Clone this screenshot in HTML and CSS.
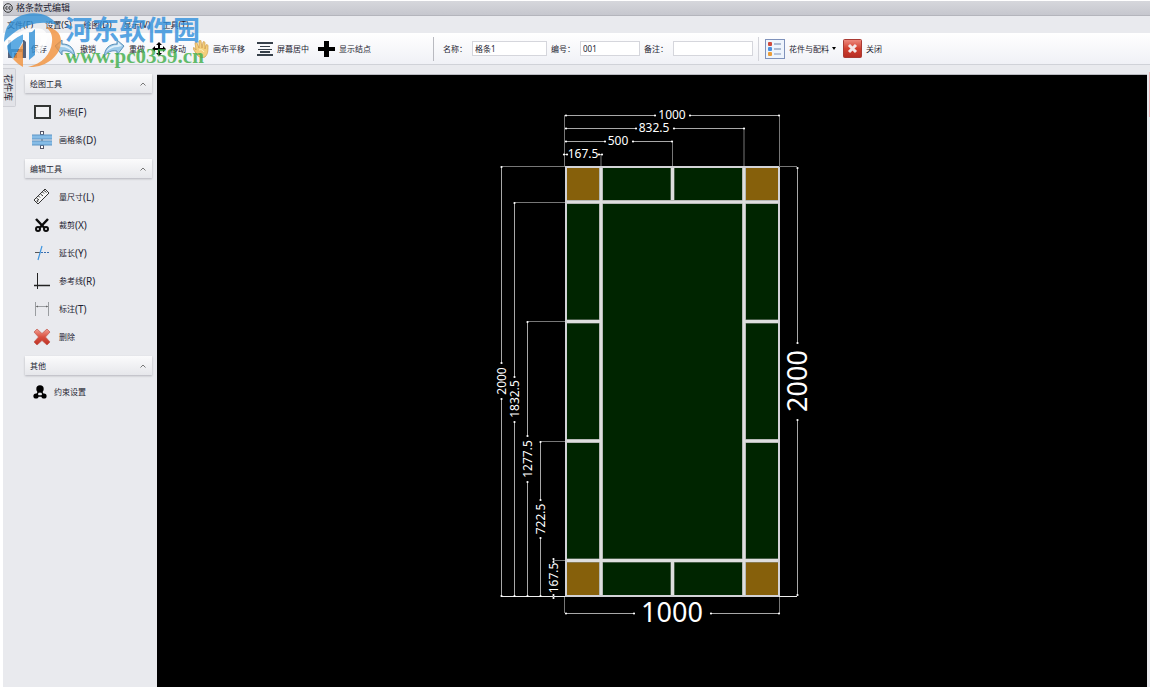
FILE: index.html
```html
<!DOCTYPE html>
<html lang="zh-CN">
<head>
  <meta charset="UTF-8">
  <meta name="viewport" content="width=device-width, initial-scale=1.0">
  <title>格条款式编辑</title>
  <link rel="stylesheet" href="styles.css">
</head>
<body>
  <div class="window">
    <header class="titlebar">
      <svg width="10" height="10" viewBox="0 0 10 10" fill="none" stroke="#333">
        <circle cx="5" cy="5" r="4.3"/>
        <path d="M4.6 3.8a1.3 1.3 0 1 0 0 2.4M7.6 3.8a1.3 1.3 0 1 0 0 2.4"/>
      </svg>
      <span>格条款式编辑</span>
    </header>

    <nav class="menubar">
      <button>文件<span class="key">(F)</span></button>
      <button>设置<span class="key">(S)</span></button>
      <button>绘图<span class="key">(D)</span></button>
      <button>显示<span class="key">(V)</span></button>
      <button>工具<span class="key">(T)</span></button>
    </nav>

    <div class="toolbar">
      <div class="actions">
        <button>
          <svg width="20" height="20" viewBox="0 0 20 20">
            <path d="M1 1h16l2 2v16H1z" fill="#55617a"/>
            <path d="M4 1h12v9H4z" fill="#e3e8f0"/>
            <path d="M5 13h10v6H5z" fill="#c5ccd8"/>
            <path d="M7 14h3v5H7z" fill="#3f485c"/>
          </svg>
          保存
        </button>
        <button>
          <svg width="22" height="20" viewBox="0 0 22 20">
            <path d="M1 7L8 1v4c8 0 12 4 13 13-3-5-7-7-13-6v4z" fill="#9dcbea" stroke="#5a8fb8"/>
            <path d="M3 7l4-4v3c6 0 10 3 12 7-3-3-7-5-12-5z" fill="#dff0fb"/>
          </svg>
          撤销
        </button>
        <button>
          <svg width="22" height="20" viewBox="0 0 22 20">
            <path d="M21 7l-7-6v4C6 5 2 9 1 18c3-5 7-7 13-6v4z" fill="#9dcbea" stroke="#5a8fb8"/>
            <path d="M19 7l-4-4v3C9 6 5 9 3 13c3-3 7-5 12-5z" fill="#dff0fb"/>
          </svg>
          重做
        </button>
        <button>
          <svg width="14" height="14" viewBox="0 0 14 14">
            <path d="M7 0l3 3H8v3h3V4l3 3-3 3V8H8v3h2l-3 3-3-3h2V8H3v2L0 7l3-3v2h3V3H4z"/>
          </svg>
          移动
        </button>
        <button>
          <svg width="16" height="18" viewBox="0 0 16 18">
            <path d="M5 16C3 13 1 11 0 8c1-1 2 0 3 2L2 3c1-1 2-1 2 0l2 5V1c1-1 2-1 2 0l1 7 1-6c1-1 2 0 2 1v6l1-4c1-1 2 0 2 1 0 5 0 8-3 11-2 1-4 1-5 0z" fill="#f3cf7c" stroke="#d09a45" stroke-width=".7"/>
            <path d="M6 10c2-1 4 0 5 2" fill="none" stroke="#fff0c0"/>
          </svg>
          画布平移
        </button>
        <div class="view">
          <button>
            <svg width="16" height="14" viewBox="0 0 16 14" fill="#37404a">
              <path d="M0 0h16v2H0zM3 4h10v1H3zM1 7h14v1H1zM3 9h10v2H3zM0 12h16v2H0z"/>
            </svg>
            屏幕居中
          </button>
          <button>
            <svg width="17" height="18" viewBox="0 0 17 18">
              <path d="M6 1h5v6h6v4h-6v6H6v-6H0V7h6z"/>
            </svg>
            显示结点
          </button>
        </div>
      </div>

      <div class="fields">
        <label for="name">名称：</label>
        <input class="name" type="text" id="name" value="格条1">
        <label for="code">编号：</label>
        <input class="code" type="text" id="code" value="001">
        <label for="remark">备注：</label>
        <input class="remark" type="text" id="remark">
      </div>

      <div class="extra">
        <button>
          <svg width="20" height="20" viewBox="0 0 20 20">
            <rect x=".5" y=".5" width="19" height="19" fill="#eef4fc" stroke="#7f92bb"/>
            <rect x="3" y="3" width="4" height="4" rx="1" fill="#cf4a3c"/>
            <rect x="3" y="8" width="4" height="4" rx="1" fill="#4c8fdc"/>
            <rect x="3" y="13" width="4" height="4" rx="1" fill="#eb9d38"/>
            <path d="M9 5h7M9 10h7" stroke="#6a80a8"/>
            <path d="M9 15h7" stroke="#b7c4da" stroke-width="2"/>
          </svg>
          花件与配料
          <svg class="drop" width="4" height="3" viewBox="0 0 4 3"><path d="M0 0h4L2 3z"/></svg>
        </button>
        <button>
          <svg width="19" height="19" viewBox="0 0 19 19">
            <defs>
              <linearGradient id="closeFill" x2="0" y2="1">
                <stop offset="0" stop-color="#ee8c80"/>
                <stop offset=".5" stop-color="#d2402f"/>
                <stop offset="1" stop-color="#b52c22"/>
              </linearGradient>
            </defs>
            <rect x=".5" y=".5" width="18" height="18" rx="1" fill="url(#closeFill)" stroke="#a93a33"/>
            <path d="M6 6l7 7M13 6l-7 7" stroke="#f4e8e8" stroke-width="3"/>
          </svg>
          关闭
        </button>
      </div>
    </div>

    <div class="workspace">
      <button class="side-tab">花件库</button>

      <aside class="tools">
        <section>
          <h2>绘图工具 <svg width="6" height="4" viewBox="0 0 6 4"><path d="M.5 3.5L3 1l2.500 2.500"/></svg></h2>
          <button>
            <span class="icon"><svg width="17" height="15" viewBox="0 0 17 15"><rect x="1" y="1" width="15" height="12" fill="#f0f1f3" stroke="#333634" stroke-width="2"/></svg></span>
            外框<span class="key">(F)</span>
          </button>
          <button>
            <span class="icon">
              <svg width="20" height="20" viewBox="0 0 20 20">
                <path d="M10 1v18" stroke="#444"/>
                <rect x="8.500" y="1.500" width="3" height="3" fill="#fff" stroke="#556"/>
                <rect x="8.500" y="15.500" width="3" height="3" fill="#fff" stroke="#556"/>
                <path d="M0 5h20v4H0zM0 11h20v4H0z" fill="#86bce6"/>
                <path d="M0 5h20M0 9h20M0 11h20M0 15h20" stroke="#5d94c4"/>
              </svg>
            </span>
            画格条<span class="key">(D)</span>
          </button>
        </section>

        <section>
          <h2>编辑工具 <svg width="6" height="4" viewBox="0 0 6 4"><path d="M.5 3.5L3 1l2.500 2.500"/></svg></h2>
          <button>
            <span class="icon">
              <svg width="18" height="18" viewBox="0 0 18 18" fill="none" stroke="#333">
                <path d="M1 12L12 1l4 4L5 16z" fill="#f7f7f7"/>
                <path d="M3.500 10l2.500 2M5.500 8l1.500 1.500M7.500 6l2.500 2M9.500 4l1.500 1.500M11 2.500l2.500 2"/>
                <circle cx="4.500" cy="13" r=".6"/>
              </svg>
            </span>
            量尺寸<span class="key">(L)</span>
          </button>
          <button>
            <span class="icon">
              <svg width="14" height="14" viewBox="0 0 14 14" fill="none" stroke="#0c0c0c" stroke-width="2">
                <path d="M1 1l8.500 9M13 1L4.500 10" stroke-width="2.500"/>
                <circle cx="3" cy="11" r="2"/>
                <circle cx="11" cy="11" r="2"/>
              </svg>
            </span>
            裁剪<span class="key">(X)</span>
          </button>
          <button>
            <span class="icon">
              <svg width="16" height="16" viewBox="0 0 16 16" fill="none">
                <path d="M1 7.500h5" stroke="#555"/>
                <path d="M7 7.500h9" stroke="#3a6fb0" stroke-dasharray="2 1"/>
                <path d="M4 15L8 1" stroke="#3d95e0" stroke-width="1.200"/>
              </svg>
            </span>
            延长<span class="key">(Y)</span>
          </button>
          <button>
            <span class="icon">
              <svg width="16" height="16" viewBox="0 0 16 16" fill="none" stroke="#222">
                <path d="M3.500 0v16"/>
                <path d="M0 12.500h16" stroke-width="1.500"/>
              </svg>
            </span>
            参考线<span class="key">(R)</span>
          </button>
          <button>
            <span class="icon">
              <svg width="16" height="14" viewBox="0 0 16 14" fill="none" stroke="#9a9da0">
                <path d="M1.500 0v14M14.500 0v14M2 4.500h12"/>
                <path d="M2 4.500l2-1v2zM14 4.500l-2-1v2z" fill="#666" stroke="none"/>
              </svg>
            </span>
            标注<span class="key">(T)</span>
          </button>
          <button>
            <span class="icon">
              <svg width="18" height="18" viewBox="0 0 18 18">
                <defs>
                  <linearGradient id="crossFill" x2="0" y2="1">
                    <stop offset="0" stop-color="#f2a093"/>
                    <stop offset=".5" stop-color="#d9503f"/>
                    <stop offset="1" stop-color="#bd3226"/>
                  </linearGradient>
                </defs>
                <path d="M1 4l3-3 5 4.500L14 1l3 3-4.500 5 4.500 5-3 3-5-4.500L4 17l-3-3 4.500-5z" fill="url(#crossFill)" stroke="#c2594d" stroke-width=".7" stroke-linejoin="round"/>
              </svg>
            </span>
            删除
          </button>
        </section>

        <section>
          <h2>其他 <svg width="6" height="4" viewBox="0 0 6 4"><path d="M.5 3.5L3 1l2.500 2.500"/></svg></h2>
          <button class="near">
            <span class="icon">
              <svg width="14" height="14" viewBox="0 0 14 14">
                <path d="M7 4L3 11h8z" fill="none" stroke="#000" stroke-width="1.500"/>
                <circle cx="7" cy="4" r="3.700"/>
                <circle cx="3" cy="11" r="2.600"/>
                <circle cx="11" cy="11" r="2.600"/>
              </svg>
            </span>
            约束设置
          </button>
        </section>
      </aside>

      <main class="canvas">
        <svg class="drawing" viewBox="157 75 990 612">
          <defs>
            <marker id="dot" markerWidth="4" markerHeight="4" refX="2" refY="2" markerUnits="userSpaceOnUse">
              <circle cx="2" cy="2" r="1.100" fill="#fff"/>
            </marker>
          </defs>

          <!-- glass -->
          <rect x="566" y="167" width="213" height="429" fill="#002500"/>
          <g fill="#86600b">
            <rect x="566" y="167" width="35" height="35"/>
            <rect x="744" y="167" width="35" height="35"/>
            <rect x="566" y="561" width="35" height="35"/>
            <rect x="744" y="561" width="35" height="35"/>
          </g>

          <!-- bars -->
          <path class="bar-edge" d="M601 167v429M744 167v429M672.500 167v33M672.500 561v35M566 321.500h34M745 321.500h34M566 441h34M745 441h34M566 202h213M566 560.500h213"/>
          <path class="bar" d="M601 167v429M744 167v429M672.500 167v33M672.500 561v35M566 321.500h34M745 321.500h34M566 441h34M745 441h34M566 202h213M566 560.500h213"/>
          <rect class="frame" x="566" y="167" width="213" height="429"/>

          <!-- extension lines -->
          <path class="ext" d="M564.500 115v51M779.500 115v51M744 128v38M672.500 141v25M601 154v12M501 166.500h64M514 202.500h51M527 321.500h38M540 441.500h25M553 560.500h12M779 166.500h18M564.500 597v16M779.500 597v16"/>
          <path class="base" d="M501 596.500h64M779 596.500h18"/>

          <!-- dimension lines -->
          <g class="dim">
            <path d="M566 115.500h89"/><path d="M690 115.500h89"/>
            <path d="M566 128.500h70"/><path d="M674 128.500h70"/>
            <path d="M566 141.500h39"/><path d="M633 141.500h39"/>
            <path d="M564 154.500h3"/><path d="M599 154.500h3"/>
            <path d="M501.500 167v196"/><path d="M501.500 399v197"/>
            <path d="M514.500 203v174"/><path d="M514.500 422v174"/>
            <path d="M527.500 322v114"/><path d="M527.500 482v114"/>
            <path d="M540.500 442v58"/><path d="M540.500 538v58"/>
            <path d="M553.500 559v3"/><path d="M553.500 595v3"/>
            <path d="M797.500 168v175"/><path d="M797.500 420v175"/>
            <path d="M566 613.500h68"/><path d="M711 613.500h68"/>
          </g>

          <g class="num">
            <text x="672" y="119">1000</text>
            <text x="654" y="132">832.5</text>
            <text x="618" y="145">500</text>
            <text x="583" y="158">167.5</text>
            <text transform="translate(506 381) rotate(-90)">2000</text>
            <text transform="translate(519 399) rotate(-90)">1832.5</text>
            <text transform="translate(532 459) rotate(-90)">1277.5</text>
            <text transform="translate(545 519) rotate(-90)">722.5</text>
            <text transform="translate(558 578) rotate(-90)">167.5</text>
          </g>
          <g class="num big">
            <text x="672" y="622">1000</text>
            <text transform="translate(807 381) rotate(-90)">2000</text>
          </g>
        </svg>
      </main>
      <div class="edge"></div>
    </div>
  </div>

  <!-- site watermark, lies over the top left corner -->
  <div class="watermark">
    <svg width="58" height="56" viewBox="0 0 58 56">
      <path d="M3 15C10 4 24-1 37 2c8 2 13 6 16 11-9-3-18-3-27 0C15 16 7 22 0 30c0-5 1-10 3-15z" fill="#2f8fd6"/>
      <path d="M3 33c5-6 10-10 16-13v9L9 47c-4-4-6-9-6-14z" fill="#3d9ce0"/>
      <path d="M25 17h6v26l-6 5z" fill="#2f8fd6"/>
      <path d="M9 47l10-16v24c-4-2-7-5-10-8z" fill="#f2913a"/>
      <path d="M24 55c14-3 23-13 24-25 1-7-2-12-6-15 9 1 15 6 15 14 0 15-15 27-33 26z" fill="#f2913a"/>
      <path d="M31 17c8-2 13 3 12 10-1 8-6 13-12 16v-6c4-3 6-7 6-10 0-4-2-5-6-5z" fill="#fff"/>
      <path d="M0 31c9-9 21-15 32-15l-4 4C18 21 9 27 1 36z" fill="#fff"/>
    </svg>
    <div class="mark-text">
      <strong>河东软件园</strong>
      <span>www.pc0359.cn</span>
    </div>
  </div>
</body>
</html>
```
FILE: styles.css
```css
* {
  box-sizing: border-box;
}
body {
  margin: 0;
  background: #fff;
  color: #1e1e32;
  font-family: "Noto Sans", "Noto Sans CJK SC", sans-serif;
  font-size: 8px;
  line-height: 12px;
}
button {
  display: flex;
  align-items: center;
  margin: 0;
  padding: 0;
  border: none;
  background: none;
  color: inherit;
  font: inherit;
  white-space: nowrap;
}
svg {
  display: block;
  flex: none;
}
.window {
  display: flex;
  flex-direction: column;
  height: 100vh;
  padding: 1px 0 0 3px;
  overflow: hidden;
}
.titlebar {
  display: flex;
  align-items: center;
  gap: 3px;
  height: 15px;
  border-bottom: 1px solid #b4b5bc;
  background: linear-gradient(#d6d7dc, #c6c7ce);
  font-size: 9px;
}
.menubar {
  display: flex;
  gap: 12px;
  height: 17px;
  padding-left: 4px;
  background: #e9eaee;
}
.key {
  font-size: 9px;
}

/* toolbar */
.toolbar {
  display: flex;
  align-items: center;
  height: 32px;
  border-bottom: 1px solid #d0d2d8;
  background: linear-gradient(#fff, #f0f1f6);
}
.toolbar button {
  gap: 4px;
}
.actions {
  display: flex;
  gap: 7px;
  width: 430px;
  padding-left: 4px;
}
.view {
  display: flex;
  gap: 9px;
  margin-left: 5px;
}
.fields {
  display: flex;
  align-items: center;
  height: 24px;
  padding: 0 5px 0 9px;
  border-left: 1px solid #b9bac0;
  border-right: 1px solid #d3d4da;
}
.fields label {
  width: 29px;
  white-space: nowrap;
}
.fields input {
  height: 15px;
  margin-right: 4px;
  padding: 0 2px;
  border: 1px solid #d5d6dc;
  background: #fff;
  color: inherit;
  font: inherit;
}
.fields .name {
  width: 75px;
}
.fields .code {
  width: 60px;
}
.fields .remark {
  width: 80px;
  margin-right: 0;
}
.extra {
  display: flex;
  gap: 7px;
  padding-left: 6px;
}
.extra .drop {
  margin-left: -1px;
}

/* left side */
.workspace {
  display: flex;
  flex: 1;
  align-items: flex-start;
  min-height: 0;
  background: #e9eaee;
}
.side-tab {
  width: 13px;
  height: 39px;
  margin-top: 3px;
  padding-right: 3px;
  justify-content: center;
  border: 1px solid #cfd0d6;
  border-left: none;
  border-radius: 0 2px 2px 0;
  background: #e2e3e8;
  font-size: 9px;
  writing-mode: vertical-rl;
  text-orientation: sideways;
}
.tools {
  width: 141px;
  padding: 9px 5px 0 9px;
}
.tools section {
  margin-bottom: 5px;
}
.tools h2 {
  display: flex;
  align-items: center;
  justify-content: space-between;
  height: 19px;
  margin: 0 0 5px;
  padding: 0 6px 0 5px;
  background: linear-gradient(#fbfbfc, #e6e7eb);
  box-shadow: 0 1px 2px #b4b5bc;
  font-size: 8px;
  font-weight: normal;
}
.tools h2 svg {
  fill: none;
  stroke: #777;
}
.tools button {
  width: 100%;
  height: 28px;
  padding-left: 7px;
}
.tools .key {
  font-size: 10px;
}
.icon {
  display: flex;
  justify-content: center;
  width: 20px;
  margin-right: 7px;
}
.tools .near {
  height: 24px;
  padding-left: 5px;
}
.near .icon {
  margin-right: 4px;
}

/* drawing area */
.canvas {
  flex: 1;
  align-self: stretch;
  min-width: 0;
  margin: 9px 2px 0 0;
  border-top: 1px solid #b9bac0;
  background: #000;
}
.drawing {
  width: 100%;
  height: 100%;
}
.edge {
  width: 1px;
  height: 45px;
  margin-top: 7px;
  background: #f0b4b9;
}
.bar-edge {
  fill: none;
  stroke: #8d938d;
  stroke-width: 4;
}
.bar {
  fill: none;
  stroke: #dedede;
  stroke-width: 3;
}
.frame {
  fill: none;
  stroke: #d2d2d6;
  stroke-width: 2;
}
.ext {
  stroke: #777;
}
.base {
  stroke: #eee;
}
.dim {
  stroke: #a8a8a8;
}
.dim path {
  marker-start: url(#dot);
  marker-end: url(#dot);
}
.num {
  fill: #fff;
  font-size: 12px;
  text-anchor: middle;
}
.big {
  font-size: 27px;
}

/* watermark */
.watermark {
  position: absolute;
  top: 12px;
  left: 4px;
  display: flex;
  gap: 3px;
  opacity: 0.8;
  pointer-events: none;
}
.mark-text {
  display: flex;
  flex-direction: column;
}
.mark-text strong {
  color: #2f8fdc;
  font-family: "Noto Sans CJK SC", sans-serif;
  font-size: 27px;
  line-height: 34px;
}
.mark-text span {
  color: #3fae49;
  font-family: "Liberation Serif", serif;
  font-size: 21px;
  font-weight: bold;
  line-height: 20px;
}
```
